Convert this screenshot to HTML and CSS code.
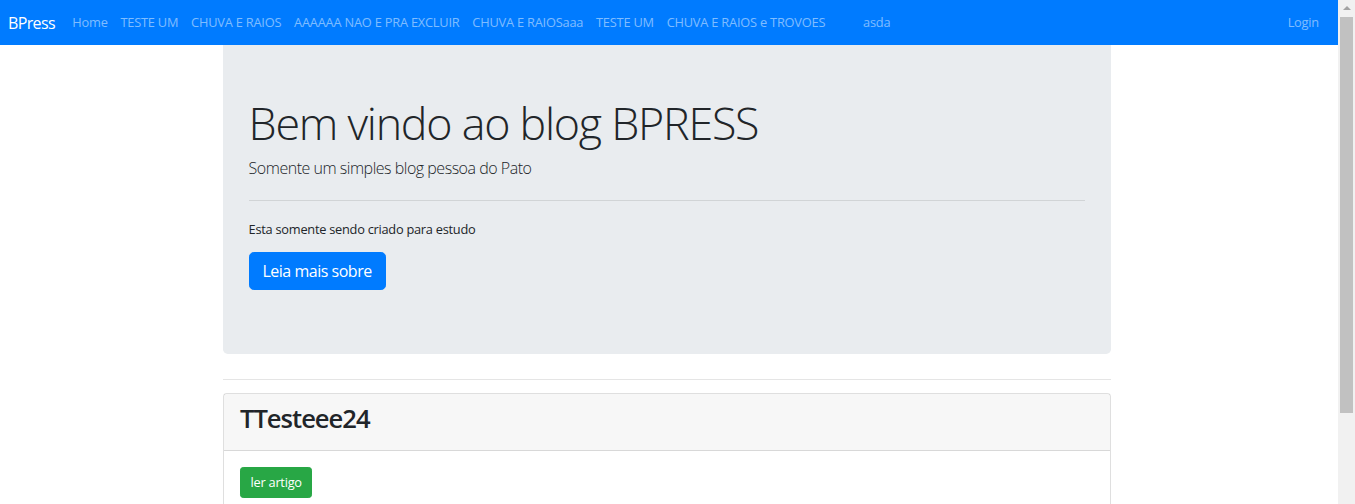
FILE: index.html
```html
<!DOCTYPE html>
<html lang="pt">
<head>
<meta charset="utf-8">
<title>BPress</title>
<link rel="stylesheet" href="styles.css">
</head>
<body>
<div class="page">
  <nav class="navbar">
    <a class="brand" href="#">BPress</a>
    <ul class="nav">
      <li><a href="#">Home</a></li>
      <li><a href="#">TESTE UM</a></li>
      <li><a href="#">CHUVA E RAIOS</a></li>
      <li><a href="#">AAAAAA NAO E PRA EXCLUIR</a></li>
      <li><a href="#">CHUVA E RAIOSaaa</a></li>
      <li><a href="#">TESTE UM</a></li>
      <li><a href="#">CHUVA E RAIOS e TROVOES</a></li>
      <li class="gap"><a href="#">asda</a></li>
    </ul>
    <a class="login" href="#">Login</a>
  </nav>
  <main class="container">
    <section class="jumbotron">
      <h1 class="display">Bem vindo ao blog BPRESS</h1>
      <p class="lead">Somente um simples blog pessoa do Pato</p>
      <hr class="jhr">
      <p class="text">Esta somente sendo criado para estudo</p>
      <p class="lead"><a class="btn btn-lg btn-primary" href="#">Leia mais sobre</a></p>
    </section>
    <hr class="sep">
    <article class="card">
      <div class="card-header"><h2>TTesteee24</h2></div>
      <div class="card-body"><a class="btn btn-success" href="#">ler artigo</a></div>
    </article>
  </main>
</div>
<div class="scrollbar">
  <div class="arrow"></div>
  <div class="thumb"></div>
</div>
</body>
</html>
```

FILE: styles.css
```css
html, body {
  margin: 0;
  padding: 0;
  overflow: hidden;
  height: 100%;
}
body {
  font-family: "Open Sans", "Noto Sans", sans-serif;
  font-size: 12.8px;
  line-height: 1.5;
  letter-spacing: -0.02em;
  color: #212529;
  background: #fff;
}
.page {
  width: 1338px;
}
a { text-decoration: none; }

.navbar {
  display: flex;
  align-items: center;
  background: #007bff;
  height: 45px;
  padding: 0 12.8px 0 8px;
  box-sizing: border-box;
}
.brand {
  color: #fff;
  font-size: 16px;
  margin-right: 11px;
  line-height: 1.5;
  letter-spacing: -0.04em;
}
.nav {
  display: flex;
  list-style: none;
  margin: 0;
  padding: 0;
  flex: 1;
  letter-spacing: -0.016em;
}
.nav a, .login {
  display: block;
  color: rgba(255,255,255,.5);
  padding: 8px 6.4px;
}
.nav .gap { margin-left: 25px; }

.container {
  width: 888px;
  margin-left: 223px;
}
.jumbotron {
  background: #e9ecef;
  border-radius: 0 0 4.8px 4.8px;
  padding: 51.2px 25.6px 50.4px;
  margin-bottom: 25.6px;
}
.display {
  font-size: 44.8px;
  font-weight: 300;
  line-height: 1.2;
  letter-spacing: -0.028em;
  margin: 0 0 6.4px;
}
.lead {
  font-size: 16px;
  font-weight: 300;
  letter-spacing: -0.03em;
  margin: 0 0 12.8px;
}
.jhr {
  border: 0;
  border-top: 1px solid rgba(0,0,0,.1);
  margin: 19.2px 0;
}
.text { margin: 0 0 12.8px; }

.btn {
  display: inline-block;
  color: #fff;
  border: 1px solid transparent;
  font-weight: 400;
  vertical-align: middle;
}
.btn-lg {
  font-size: 16px;
  line-height: 1.5;
  padding: 6.4px 12.8px;
  border-radius: 4.8px;
}
.btn-primary { background: #007bff; border-color: #007bff; }
.btn-success {
  background: #28a745;
  border-color: #28a745;
  padding: 4.8px 9.6px;
  font-size: 12.8px;
  line-height: 1.5;
  border-radius: 3.2px;
}

.sep {
  border: 0;
  border-top: 1px solid rgba(0,0,0,.1);
  margin: 0 0 12.8px;
}
.card {
  border: 1px solid rgba(0,0,0,.125);
  border-radius: 3.2px;
}
.card-header {
  background: rgba(0,0,0,.03);
  border-bottom: 1px solid rgba(0,0,0,.125);
  padding: 9.6px 16px;
}
.card-header h2 {
  font-size: 25.6px;
  font-weight: 600;
  line-height: 1.2;
  letter-spacing: -0.04em;
  margin: 0 0 6.4px;
}
.card-body { padding: 16px; }

.scrollbar {
  position: fixed;
  top: 0;
  right: 0;
  width: 17px;
  height: 100%;
  background: #f1f1f1;
}
.arrow {
  width: 0;
  height: 0;
  margin: 6px auto 0;
  border-left: 4px solid transparent;
  border-right: 4px solid transparent;
  border-bottom: 4px solid #a3a3a3;
}
.thumb {
  position: absolute;
  top: 17px;
  left: 2px;
  width: 13px;
  height: 396px;
  background: #c1c1c1;
}
```
